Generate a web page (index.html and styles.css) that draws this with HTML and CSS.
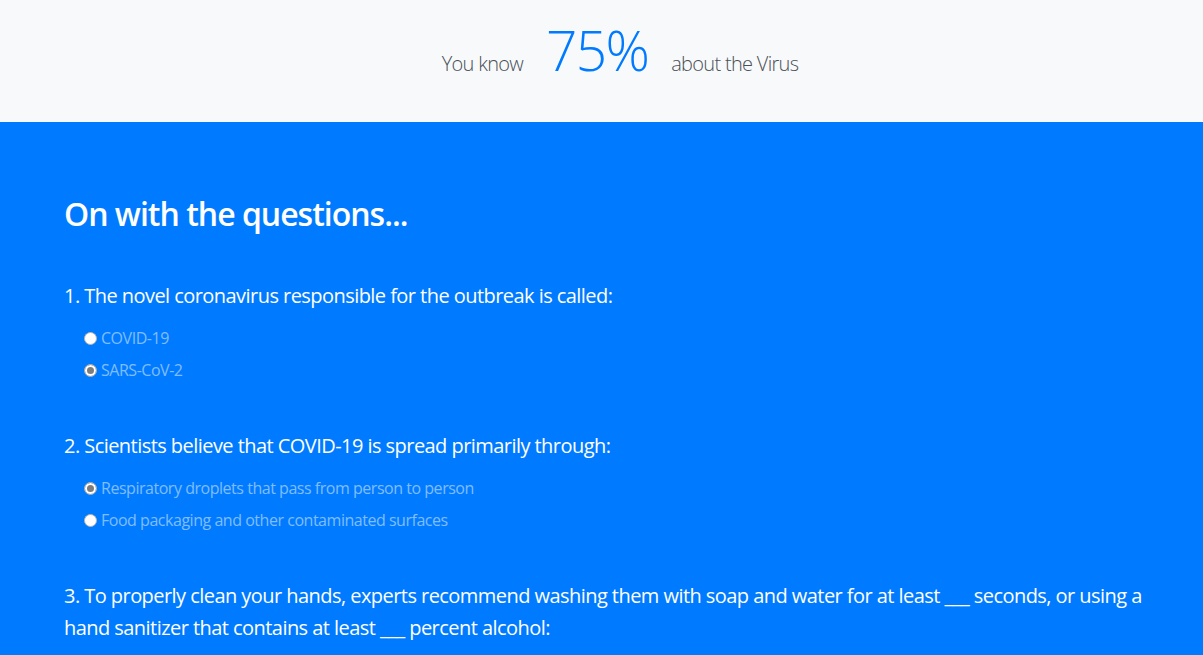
FILE: index.html
```html
<!DOCTYPE html>
<html lang="en">
<head>
<meta charset="utf-8">
<title>Virus Quiz</title>
<link rel="stylesheet" href="styles.css">
</head>
<body>
<header class="score">
  <span class="score-text">You know</span>
  <span class="score-value">75%</span>
  <span class="score-text">about the Virus</span>
</header>
<main class="quiz">
  <h2 class="quiz-title">On with the questions...</h2>

  <section class="question">
    <p class="question-text">1. The novel coronavirus responsible for the outbreak is called:</p>
    <label class="option"><input type="radio" name="q1" disabled><span>COVID-19</span></label>
    <label class="option"><input type="radio" name="q1" checked disabled><span>SARS-CoV-2</span></label>
  </section>

  <section class="question">
    <p class="question-text">2. Scientists believe that COVID-19 is spread primarily through:</p>
    <label class="option"><input type="radio" name="q2" checked disabled><span>Respiratory droplets that pass from person to person</span></label>
    <label class="option"><input type="radio" name="q2" disabled><span>Food packaging and other contaminated surfaces</span></label>
  </section>

  <section class="question">
    <p class="question-text">3. To properly clean your hands, experts recommend washing them with soap and water for at least ___ seconds, or using a hand sanitizer that contains at least ___ percent alcohol:</p>
  </section>
</main>
</body>
</html>
```
FILE: styles.css
```css
* { box-sizing: border-box; }
html, body { margin: 0; padding: 0; }
body {
  font-family: "Open Sans", "Noto Sans", sans-serif;
  background: #007bff;
  color: #fff;
}
.score {
  height: 122px;
  background: #f8f9fa;
  display: flex;
  justify-content: center;
  align-items: baseline;
  padding-top: 17px;
  padding-left: 37px;
  gap: 23px;
}
.score-text {
  font-size: 20px;
  font-weight: 300;
  color: #495057;
  letter-spacing: -0.7px;
}
.score-value {
  font-size: 55px;
  font-weight: 300;
  color: #007bff;
  line-height: 1.2;
  letter-spacing: -1.7px;
}
.quiz {
  padding: 73px 58px 40px 64px;
}
.quiz-title {
  margin: 0 0 47px;
  font-size: 32px;
  font-weight: 600;
  line-height: 1.2;
  letter-spacing: -1px;
}
.question {
  margin-bottom: 44px;
}
.question-text {
  margin: 0 0 10px;
  font-size: 20px;
  line-height: 32px;
  letter-spacing: -0.55px;
}
.option {
  display: flex;
  align-items: center;
  height: 32px;
  padding-left: 20px;
  font-size: 16px;
  color: #80bdff;
  letter-spacing: -0.47px;
}
.option input {
  appearance: none;
  -webkit-appearance: none;
  width: 13px;
  height: 13px;
  margin: 0 4px 0 0;
  border-radius: 50%;
  border: 1px solid #b5b5b5;
  background: #fff;
}
.option input:checked {
  background: #7d7d7d;
  box-shadow: inset 0 0 0 2px #fff;
}
```
